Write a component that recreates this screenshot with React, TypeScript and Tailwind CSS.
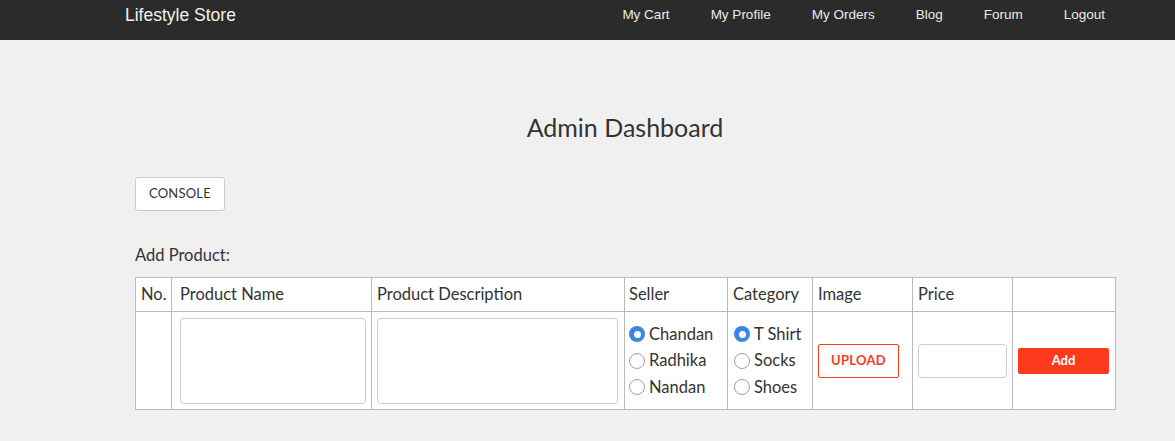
import React from "react";

const font = { fontFamily: "Lato, 'Open Sans', sans-serif" };

function Radio({ checked, label }: { checked?: boolean; label: string }) {
  return (
    <div className="flex items-center h-[26.5px]">
      {checked ? (
        <span className="w-[16px] h-[16px] rounded-full bg-[#3b86e0] flex items-center justify-center">
          <span className="w-[7px] h-[7px] rounded-full bg-white" />
        </span>
      ) : (
        <span className="w-[16px] h-[16px] rounded-full border border-[#a0a0a0] bg-white" />
      )}
      <span className="ml-[4px] text-[16.5px] text-[#333]">{label}</span>
    </div>
  );
}

export default function App() {
  const nav = ["My Cart", "My Profile", "My Orders", "Blog", "Forum", "Logout"];
  return (
    <div className="min-h-[441px] bg-[#f0f0f0]" style={font}>
      <div className="h-[40px] bg-[#2b2b2b] flex items-center" style={{ fontFamily: "'Liberation Sans', Arial, sans-serif" }}>
        <div className="ml-[125px] text-[17.5px] text-[#f2f2f2] pb-[10px]">Lifestyle Store</div>
        <div className="ml-auto mr-[70px] flex gap-[41px] text-[13.5px] text-[#eaeaea] pb-[9px]">
          {nav.map((n) => (
            <span key={n}>{n}</span>
          ))}
        </div>
      </div>
      <div className="ml-[135px] w-[980px]">
        <h1 className="text-center text-[25px] text-[#333] mt-[72px] leading-[30px]">Admin Dashboard</h1>
        <button className="mt-[35px] h-[34px] w-[90px] bg-white border border-[#ccc] rounded-[3px] text-[13px] text-[#333] tracking-[0.2px]">
          CONSOLE
        </button>
        <div className="mt-[34px] text-[16.5px] text-[#333] leading-[20px]">Add Product:</div>
        <table className="mt-[12px] w-[980px] table-fixed border-collapse bg-white text-[16.5px] text-[#333]">
          <thead>
            <tr className="h-[34px]">
              <th className="border border-[#bbb] font-normal text-left px-[5px] w-[36px]">No.</th>
              <th className="border border-[#bbb] font-normal text-left px-[8px] w-[200px]">Product Name</th>
              <th className="border border-[#bbb] font-normal text-left px-[5px] w-[253px]">Product Description</th>
              <th className="border border-[#bbb] font-normal text-left px-[4px] w-[103px]">Seller</th>
              <th className="border border-[#bbb] font-normal text-left px-[5px] w-[85px]">Category</th>
              <th className="border border-[#bbb] font-normal text-left px-[5px] w-[100px]">Image</th>
              <th className="border border-[#bbb] font-normal text-left px-[5px] w-[100px]">Price</th>
              <th className="border border-[#bbb] font-normal text-left px-[5px] w-[103px]"></th>
            </tr>
          </thead>
          <tbody>
            <tr className="h-[98px]">
              <td className="border border-[#bbb]"></td>
              <td className="border border-[#bbb] pl-[8px] pr-[4px]">
                <div className="w-[186px] h-[86px] border border-[#ccc] rounded-[4px] bg-white" />
              </td>
              <td className="border border-[#bbb] pl-[5px] pr-[5px]">
                <div className="w-[241px] h-[86px] border border-[#ccc] rounded-[4px] bg-white" />
              </td>
              <td className="border border-[#bbb] pl-[4px] align-middle">
                <Radio checked label="Chandan" />
                <Radio label="Radhika" />
                <Radio label="Nandan" />
              </td>
              <td className="border border-[#bbb] pl-[6px] align-middle">
                <Radio checked label="T Shirt" />
                <Radio label="Socks" />
                <Radio label="Shoes" />
              </td>
              <td className="border border-[#bbb] pl-[5px]">
                <div className="w-[81px] h-[34px] border border-[#fc3a1c] rounded-[2px] flex items-center justify-center text-[13px] font-bold text-[#fc3a1c] tracking-[0.3px]">
                  UPLOAD
                </div>
              </td>
              <td className="border border-[#bbb] pl-[5px]">
                <div className="w-[89px] h-[34px] border border-[#ccc] rounded-[4px] bg-white" />
              </td>
              <td className="border border-[#bbb] pl-[5px]">
                <div className="w-[91px] h-[26px] bg-[#fc3a1c] rounded-[2px] flex items-center justify-center text-[13px] font-bold text-white">
                  Add
                </div>
              </td>
            </tr>
          </tbody>
        </table>
      </div>
    </div>
  );
}
